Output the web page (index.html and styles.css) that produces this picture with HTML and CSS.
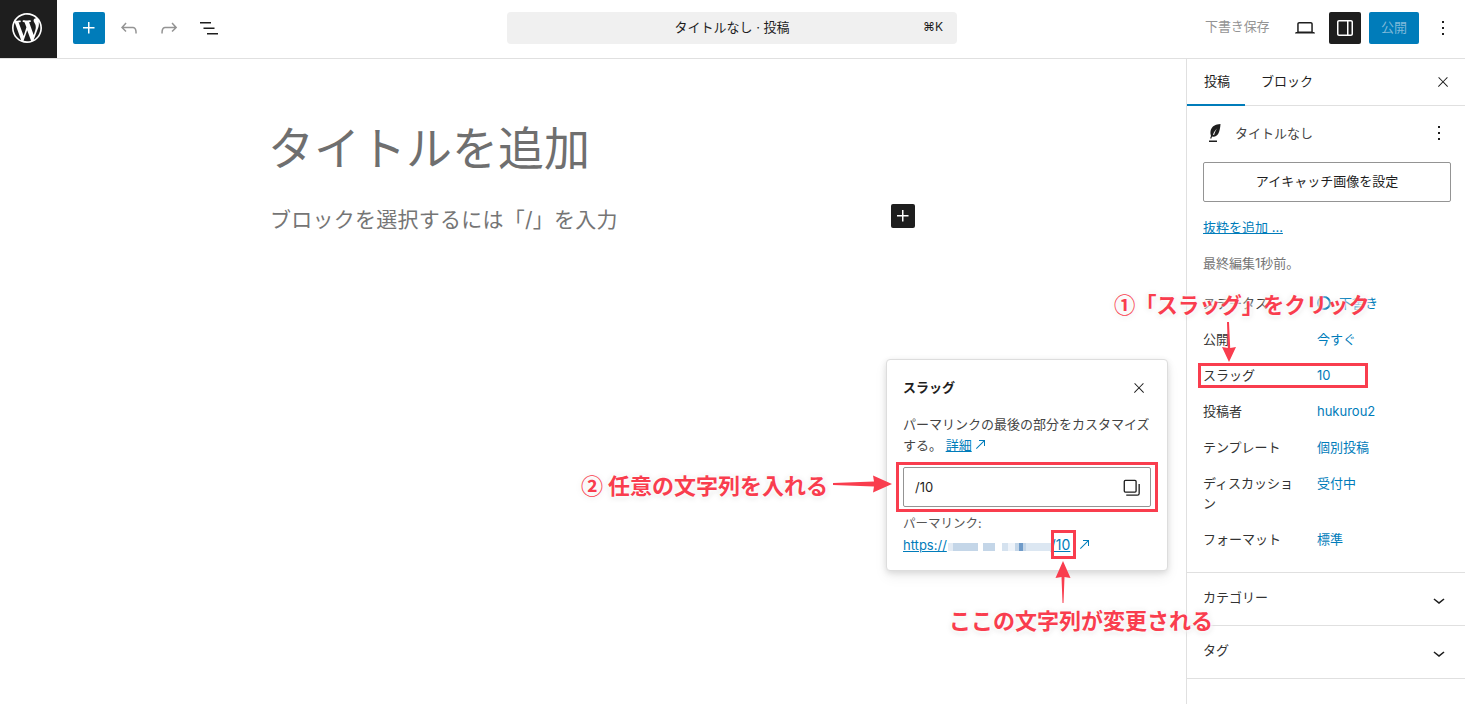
FILE: index.html
```html
<!DOCTYPE html>
<html lang="ja">
<head>
<meta charset="utf-8">
<title>タイトルなし · 投稿</title>
<link rel="stylesheet" href="styles.css">
</head>
<body>
<div class="app">
  <header class="topbar">
    <div class="tb-left">
      <div class="logo"><svg viewBox="0 0 20 20"><path fill="#fff" d="M20 10c0-5.51-4.49-10-10-10C4.48 0 0 4.49 0 10c0 5.52 4.48 10 10 10 5.51 0 10-4.48 10-10zM7.78 15.37L4.37 6.22c.55-.02 1.17-.08 1.17-.08.5-.06.44-1.13-.06-1.11 0 0-1.45.11-2.37.11-.18 0-.37 0-.58-.01C4.12 2.69 6.87 1.11 10 1.11c2.33 0 4.45.87 6.05 2.34-.68-.11-1.65.39-1.65 1.58 0 .74.45 1.36.9 2.1.35.61.55 1.36.55 2.46 0 1.49-1.4 5-1.4 5l-3.03-8.37c.54-.02.82-.17.82-.17.5-.05.44-1.25-.06-1.22 0 0-1.44.12-2.38.12-.87 0-2.33-.12-2.33-.12-.5-.03-.56 1.2-.06 1.22l.92.08 1.26 3.41zM17.41 10c.24-.64.74-1.87.43-4.25.7 1.29 1.05 2.71 1.05 4.25 0 3.29-1.73 6.24-4.4 7.78.97-2.59 1.94-5.2 2.92-7.78zM6.1 18.09C3.12 16.65 1.11 13.53 1.11 10c0-1.3.23-2.48.72-3.59C3.25 10.3 4.67 14.2 6.1 18.09zm4.03-6.63l2.58 6.98c-.86.29-1.76.45-2.71.45-.79 0-1.57-.11-2.29-.33.81-2.38 1.62-4.74 2.42-7.1z"/></svg></div>
      <div class="tools">
        <span class="btn btn-primary"><svg class="ic white" viewBox="0 0 24 24"><path d="M11 12.5V17.5H12.5V12.5H17.5V11H12.5V6H11V11H6V12.5H11Z"/></svg></span>
        <span class="btn"><svg class="ic muted" viewBox="0 0 24 24"><path d="M18.3 11.7c-.6-.6-1.4-.9-2.3-.9H6.7l2.9-3.3-1.1-1-4.5 5L8.5 16l1-1-2.7-2.7H16c.5 0 .9.2 1.3.5 1 1 1 3.4 1 4.5v.3h1.5v-.2c0-1.5 0-4.3-1.5-5.7z"/></svg></span>
        <span class="btn"><svg class="ic muted" viewBox="0 0 24 24"><path d="M15.6 6.5l-1.1 1 2.9 3.3H8c-.9 0-1.7.3-2.3.9-1.4 1.5-1.4 4.2-1.4 5.6v.2h1.5v-.3c0-1.1 0-3.5 1-4.5.3-.3.7-.5 1.3-.5h9.2L14.5 15l1.1 1.1 4.6-4.6-4.6-5z"/></svg></span>
        <span class="btn"><svg class="ic" viewBox="0 0 24 24"><path d="M3 6h11v1.5H3V6Zm3.5 5.5h11V13h-11v-1.5ZM21 17H10v1.5h11V17Z"/></svg></span>
      </div>
    </div>
    <div class="command">
      <span class="command-title">タイトルなし · 投稿</span>
      <span class="command-key">⌘K</span>
    </div>
    <div class="tb-right">
      <span class="save">下書き保存</span>
      <span class="btn view"><svg class="ic" viewBox="0 0 24 24"><path d="M20.5 16h-.7V8c0-1.1-.9-2-2-2H6.2c-1.1 0-2 .9-2 2v8h-.7c-.8 0-1.5.7-1.5 1.5h20c0-.8-.7-1.5-1.5-1.5zM5.7 8c0-.3.2-.5.5-.5h11.6c.3 0 .5.2.5.5v7.6H5.7V8z"/></svg></span>
      <span class="btn btn-dark"><svg class="ic white" viewBox="0 0 24 24"><path d="M18 4H6c-1.1 0-2 .9-2 2v12c0 1.1.9 2 2 2h12c1.1 0 2-.9 2-2V6c0-1.1-.9-2-2-2zm-4 14.5H6c-.3 0-.5-.2-.5-.5V6c0-.3.2-.5.5-.5h8v13zm4.500-.5c0 .3-.2.5-.5.5h-2.500v-13H18c.3 0 .5.2.5.5v12z"/></svg></span>
      <span class="publish">公開</span>
      <span class="btn more"><svg class="ic" viewBox="0 0 24 24"><path d="M13 19h-2v-2h2v2zm0-6h-2v-2h2v2zm0-6h-2V5h2v2z"/></svg></span>
    </div>
  </header>

  <div class="main">
    <main class="canvas">
      <h1 class="post-title">タイトルを追加</h1>
      <div class="para-row">
        <p class="para">ブロックを選択するには「/」を入力</p>
        <span class="inserter"><svg class="ic white" viewBox="0 0 24 24"><path d="M11 12.5V17.5H12.5V12.5H17.5V11H12.5V6H11V11H6V12.5H11Z"/></svg></span>
      </div>
    </main>

    <aside class="sidebar">
      <div class="tabs">
        <span class="tab active">投稿</span>
        <span class="tab">ブロック</span>
        <span class="tab-close"><svg class="ic ic-sm" viewBox="0 0 24 24"><path d="M13 11.8l6.1-6.3-1-1-6.1 6.2-6.1-6.2-1 1 6.1 6.3-6.5 6.7 1 1 6.5-6.6 6.5 6.6 1-1z"/></svg></span>
      </div>
      <section class="summary">
        <div class="post-head">
          <svg class="ic" viewBox="0 0 24 24"><path d="M17.500 3C12.500 3.300 8.800 5.300 7.700 9.300c-.5 2-.3 4 .3 5.700l-.9 2.300 1.100.4.9-2.100c2.600.6 5-.4 6.400-3.300C16.500 10.200 17.300 7 17.500 3zM10 13.800c.9-2.700 2.200-4.700 4.300-6.500-1.600 2.100-2.600 4.200-3.200 6.800z" fill-rule="evenodd"/><path d="M6 19.500h8V21H6z"/></svg>
          <span class="post-name">タイトルなし</span>
          <svg class="ic head-more" viewBox="0 0 24 24"><path d="M13 19h-2v-2h2v2zm0-6h-2v-2h2v2zm0-6h-2V5h2v2z"/></svg>
        </div>
        <div class="featured"><span>アイキャッチ画像を設定</span></div>
        <a class="excerpt">抜粋を追加 ...</a>
        <p class="edited">最終編集1秒前。</p>
        <dl class="rows">
          <div class="row"><dt>ステータス</dt><dd class="status"><span class="dot"></span>下書き</dd></div>
          <div class="row"><dt>公開</dt><dd>今すぐ</dd></div>
          <div class="row"><dt>スラッグ</dt><dd>10</dd></div>
          <div class="row"><dt>投稿者</dt><dd>hukurou2</dd></div>
          <div class="row"><dt>テンプレート</dt><dd>個別投稿</dd></div>
          <div class="row tall"><dt>ディスカッション</dt><dd>受付中</dd></div>
          <div class="row"><dt>フォーマット</dt><dd>標準</dd></div>
        </dl>
      </section>
      <section class="panel"><span>カテゴリー</span><svg class="ic" viewBox="0 0 24 24"><path d="M17.500 11.600L12 16l-5.500-4.400.9-1.200L12 14l4.500-3.600 1 1.200z"/></svg></section>
      <section class="panel"><span>タグ</span><svg class="ic" viewBox="0 0 24 24"><path d="M17.500 11.600L12 16l-5.500-4.400.9-1.200L12 14l4.500-3.600 1 1.200z"/></svg></section>
    </aside>
  </div>

  <div class="popover">
    <div class="pop-head">
      <strong>スラッグ</strong>
      <svg class="ic ic-sm" viewBox="0 0 24 24"><path d="M13 11.800l6.100-6.300-1-1-6.100 6.200-6.100-6.200-1 1 6.100 6.300-6.500 6.700 1 1 6.500-6.600 6.500 6.600 1-1z"/></svg>
    </div>
    <p class="pop-text">パーマリンクの最後の部分をカスタマイズする。 <a class="lnk">詳細</a> <svg class="ext" viewBox="0 0 24 24"><path d="M19.500 4.500h-9V6h6.440l-10.970 10.970 1.060 1.060L18 7.060v6.440h1.500v-9Z"/></svg></p>
    <div class="pop-input">
      <span>/10</span>
      <svg class="ic ic-copy" viewBox="0 0 24 24"><path fill-rule="evenodd" d="M5 4.500h11a.5.5 0 0 1 .5.5v11a.5.5 0 0 1-.5.5H5a.5.5 0 0 1-.5-.5V5a.5.5 0 0 1 .5-.5ZM3 5a2 2 0 0 1 2-2h11a2 2 0 0 1 2 2v11a2 2 0 0 1-2 2H5a2 2 0 0 1-2-2V5Z"/><path d="M20 8v10.750c0 .69-.56 1.250-1.250 1.250H6v1.500h12.750a2.750 2.750 0 0 0 2.750-2.750V8H20Z"/></svg>
    </div>
    <div class="pop-label">パーマリンク:</div>
    <div class="pop-link">
      <a class="lnk">https://</a>
      <span class="blur"></span>
      <a class="lnk ten">/10</a>
      <svg class="ext" viewBox="0 0 24 24"><path d="M19.500 4.500h-9V6h6.440l-10.970 10.970 1.060 1.060L18 7.060v6.440h1.500v-9Z"/></svg>
    </div>
  </div>

  <svg class="arrows" width="1465" height="704" viewBox="0 0 1465 704">
    <g fill="#f93d4e">
      <path d="M1227 322h2l1.200 26 5.800-1-7 15-7-15 5.800 1z"/>
      <path d="M833 483l41-1.500-1-6 19 8.500-19 8.500 1-6-41-1.500z"/>
      <path d="M1062.500 603l-1-26-6 1 7.500-17 7.500 17-6-1-1 26z"/>
    </g>
  </svg>
  <div class="mark mark-slug"></div>
  <div class="mark mark-input"></div>
  <div class="mark mark-ten"></div>
  <div class="note note-1">①「スラッグ」をクリック</div>
  <div class="note note-2">② 任意の文字列を入れる</div>
  <div class="note note-3">ここの文字列が変更される</div>
</div>
</body>
</html>
```

FILE: styles.css
```css
* { box-sizing: border-box; }
html, body { margin: 0; height: 100%; background: #fff; overflow: hidden; }
body {
  font-family: "Inter", "Noto Sans CJK JP", sans-serif;
  font-size: 13px;
  color: #1e1e1e;
  text-spacing-trim: space-all;
}
p, h1, dl, dd { margin: 0; }
.app { position: relative; width: 1465px; height: 704px; display: flex; flex-direction: column; overflow: hidden; }
.ic { width: 24px; height: 24px; fill: #1e1e1e; flex: none; display: block; }
.ic.white { fill: #fff; }
.ic.muted { fill: #949494; }
.ic.ic-sm { width: 16px; height: 16px; }
.ic.ic-copy { width: 21px; height: 21px; }

.topbar { height: 59px; flex: none; display: flex; align-items: flex-start; border-bottom: 1px solid #e0e0e0; }
.tb-left { width: 507px; height: 58px; display: flex; align-items: flex-start; flex: none; }
.logo { width: 57px; height: 58px; background: #1e1e1e; padding: 13px 0 0 12px; flex: none; }
.logo svg { width: 30px; height: 30px; display: block; }
.tools { display: flex; gap: 8px; margin: 12px 0 0 16px; }
.btn { width: 32px; height: 32px; border-radius: 2px; display: flex; align-items: center; justify-content: center; flex: none; }
.btn-primary { background: #007cba; }
.command { width: 450px; height: 32px; margin-top: 12px; flex: none; background: #f0f0f0; border-radius: 4px; display: flex; align-items: center; justify-content: center; position: relative; font-size: 13px; padding-bottom: 3px; }
.command-key { position: absolute; right: 14px; font-size: 12px; }
.tb-right { flex: 1; display: flex; align-items: center; margin-top: 12px; padding-left: 248px; }
.save { color: #949494; width: 64px; white-space: nowrap; font-size: 13px; margin-top: -5px; letter-spacing: -.1px; }
.view { margin-left: 20px; }
.btn-dark { margin-left: 8px; background: #1e1e1e; }
.publish { margin-left: 8px; width: 50px; height: 32px; padding-bottom: 3px; background: #007cba; color: #7fb9d9; border-radius: 2px; display: flex; align-items: center; justify-content: center; }
.more { margin-left: 8px; }

.main { flex: 1; display: flex; min-height: 0; }
.canvas { flex: 1; padding: 55px 0 0 270px; }
.post-title { font-size: 46px; font-weight: 400; line-height: 68px; color: #6f6f6f; margin-left: -2px; }
.para-row { display: flex; align-items: flex-start; margin-top: 23px; }
.para { width: 621px; font-size: 21px; line-height: 30px; color: #757575; letter-spacing: .25px; }
.inserter { width: 24px; height: 24px; background: #1e1e1e; border-radius: 2px; margin-top: -1px; flex: none; display: flex; }

.sidebar { width: 279px; flex: none; border-left: 1px solid #e0e0e0; display: flex; flex-direction: column; }
.tabs { height: 47px; flex: none; display: flex; align-items: center; border-bottom: 1px solid #e0e0e0; position: relative; }
.tab { height: 47px; padding: 0 16px; display: flex; align-items: center; margin-top: -3px; }
.tab.active { width: 58px; padding: 0 0 3px 17px; box-shadow: inset 0 -2px 0 #007cba; margin-top: 0; }
.tab-close { margin-left: auto; margin-right: 14px; }
.summary { padding: 16px 14px 14px 16px; border-bottom: 1px solid #e0e0e0; height: 467px; flex: none; }
.post-head { display: flex; align-items: center; height: 24px; margin-top: -1px; gap: 8px; color: #444; }
.post-name { flex: 1; margin-top: -2px; }
.featured { margin-top: 17px; height: 40px; border: 1px solid #949494; border-radius: 2px; display: flex; align-items: center; justify-content: center; width: 248px; padding-bottom: 4px; }
.excerpt { display: block; margin-top: 15px; line-height: 20px; color: #007cba; text-decoration: underline; }
.edited { margin-top: 16px; line-height: 20px; color: #757575; }
.rows { margin-top: 12px; }
.row { display: flex; min-height: 36px; padding-top: 8px; line-height: 20px; }
.row dt { width: 114px; flex: none; color: #333; padding-right: 16px; }
.row dd { color: #007cba; }
.row.tall { min-height: 56px; }
.status { display: flex; align-items: center; height: 20px; }
.dot { width: 14px; height: 14px; border-radius: 50%; border: 2px solid #007cba; margin-right: 8px; }
.panel { height: 53px; flex: none; display: flex; align-items: center; justify-content: space-between; padding: 0 14px 0 16px; border-bottom: 1px solid #e0e0e0; color: #333; }
.panel span { margin-top: -5px; }
.panel .ic { margin-top: 2px; }

.popover { position: absolute; left: 886px; top: 359px; width: 282px; height: 212px; background: #fff; border: 1px solid #ddd; border-radius: 4px; box-shadow: 0 2px 6px rgba(0,0,0,.12), 0 6px 14px rgba(0,0,0,.06); padding: 16px; }
.pop-head { display: flex; justify-content: space-between; align-items: center; height: 24px; margin-right: 4px; }
.pop-head strong { font-weight: 700; margin-top: -4px; }
.pop-text { margin-top: 14px; width: 250px; line-height: 21px; color: #444; }
.lnk { color: #007cba; text-decoration: underline; }
.ext { width: 16px; height: 16px; fill: #007cba; vertical-align: -3px; margin-left: -3px; }
.pop-input { margin-top: 11px; height: 40px; width: 248px; border: 1px solid #949494; border-radius: 2px; display: flex; align-items: center; justify-content: space-between; padding: 0 8px 0 11px; }
.pop-label { margin-top: 8px; line-height: 18px; color: #555; font-size: 12.5px; }
.pop-link { margin-top: 2px; display: flex; align-items: center; line-height: 20px; }
.pop-link .ext { margin-left: 6px; }
.ten { font-size: 14px; }
.blur {
  flex: none; width: 104px; height: 8px; margin-top: 3px;
  background: linear-gradient(90deg, #fff 0 1%, #e3ebf4 1% 6%, #c4d6e8 6% 30%, #fff 30% 35%, #c4d6e8 35% 46%, #fff 46% 53%, #d5e2ef 53% 59%, #eef3f9 59% 65%, #c4d6e8 65% 69%, #6f9bc9 69% 73%, #c4d6e8 73% 76%, #dce7f2 76% 100%);
}

.arrows { position: absolute; left: 0; top: 0; pointer-events: none; }
.mark { position: absolute; border: 3px solid #f93d4e; }
.mark-slug { left: 1198px; top: 363px; width: 170px; height: 25px; }
.mark-input { left: 896px; top: 462px; width: 262px; height: 50px; }
.mark-ten { left: 1051px; top: 530px; width: 25px; height: 29px; }
.note { position: absolute; font-family: "Noto Sans CJK JP", sans-serif; font-weight: 700; font-size: 21.3px; line-height: 30px; color: #f93d4e; white-space: nowrap; text-shadow: 0 0 4px #fff, 0 0 4px #fff, 0 0 6px #fff, 0 1px 6px rgba(0,0,0,.18); }
.note-1 { left: 1114px; top: 289px; }
.note-2 { left: 581px; top: 469px; font-size: 22px; }
.note-3 { left: 949px; top: 604px; font-size: 22px; }
```
